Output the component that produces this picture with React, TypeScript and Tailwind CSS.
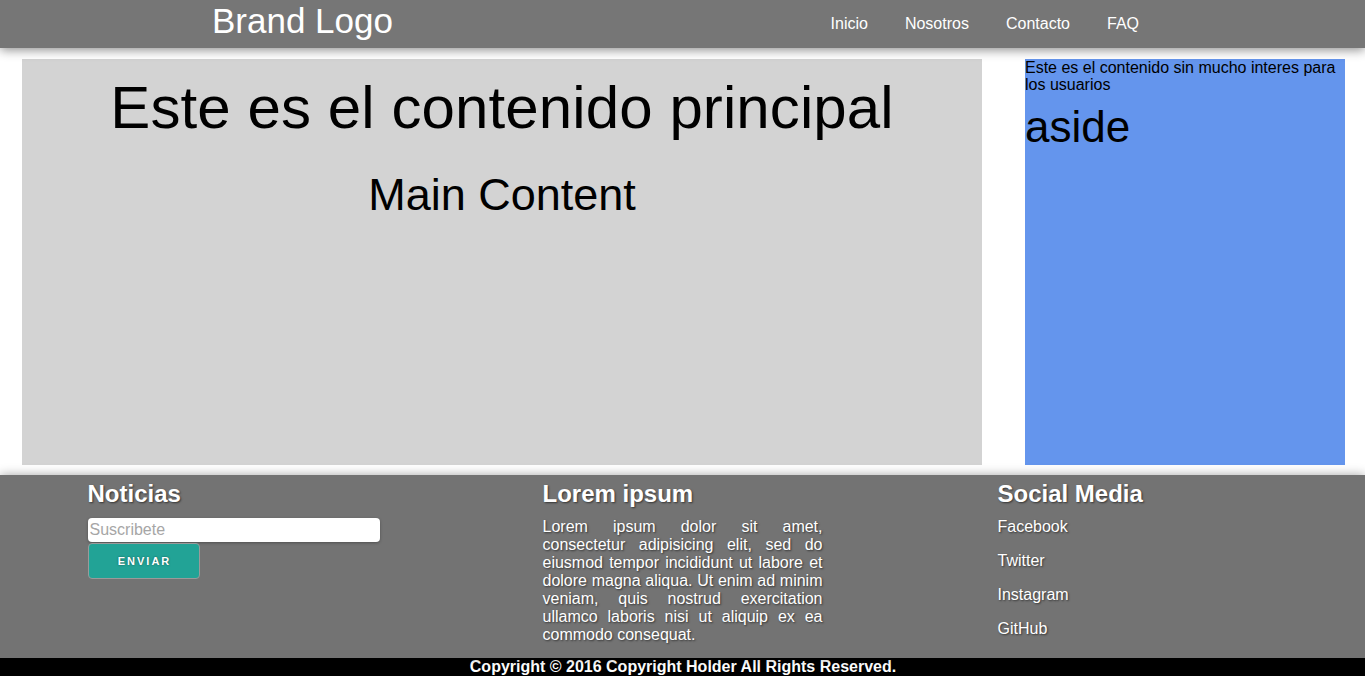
const navLinks = ["Inicio", "Nosotros", "Contacto", "FAQ"];
const socialLinks = ["Facebook", "Twitter", "Instagram", "GitHub"];

const shadow = "[text-shadow:1px_1px_2px_rgba(0,0,0,0.55)]";

export default function App() {
  return (
    <div className="min-h-screen bg-white font-['Liberation_Sans',Arial,sans-serif] text-black">
      <header className="relative z-10 flex h-[48px] items-start justify-between bg-[#767676] pl-[212px] pr-[226px] shadow-[0_2px_10px_rgba(0,0,0,0.45)]">
        <a href="#" className="text-[35px] leading-[42px] text-white">
          Brand Logo
        </a>
        <nav className="flex h-[48px] items-center gap-[37px]">
          {navLinks.map((link) => (
            <a key={link} href="#" className="text-[16px] text-white">
              {link}
            </a>
          ))}
        </nav>
      </header>

      <div className="flex h-[427px] justify-between pb-[10px] pl-[22px] pr-[20px] pt-[11px]">
        <main className="flex w-[960px] flex-col items-center bg-[#d3d3d3]">
          <h1 className="mt-[14px] text-[60px] leading-[69px] tracking-[0.1px]">
            Este es el contenido principal
          </h1>
          <h2 className="mt-[27px] text-[45px] leading-[52px]">Main Content</h2>
        </main>
        <aside className="w-[320px] bg-[#6495ed]">
          <p className="text-[16px] leading-[17px]">
            Este es el contenido sin mucho interes para los usuarios
          </p>
          <p className="mt-[9px] text-[44px] leading-[50px]">aside</p>
        </aside>
      </div>

      <footer className="relative z-10 grid h-[183px] grid-cols-3 bg-[#737373] pt-[5px] text-white shadow-[0_0_10px_rgba(0,0,0,0.35)]">
        <div className="mx-auto w-[280px]">
          <h3 className={`text-[24px] font-bold leading-[28px] ${shadow}`}>
            Noticias
          </h3>
          <input
            type="text"
            placeholder="Suscribete"
            className="mt-[10px] block h-[24px] w-[292px] rounded-[4px] bg-white px-[2px] text-[16px] text-black shadow-[0_1px_3px_rgba(0,0,0,0.3)] outline-none placeholder:text-[#a6a6a6]"
          />
          <button className="mt-[1px] h-[36px] w-[112px] rounded-[4px] border border-[#9a9a9a] bg-[#22a396] pl-[2px] text-[11px] font-bold tracking-[2px] text-white [text-shadow:0_0_2px_rgba(0,0,0,0.5)]">
            ENVIAR
          </button>
        </div>

        <div className="mx-auto w-[280px]">
          <h3 className={`text-[24px] font-bold leading-[28px] ${shadow}`}>
            Lorem ipsum
          </h3>
          <p className={`mt-[10px] text-justify text-[16px] leading-[18px] ${shadow}`}>
            Lorem ipsum dolor sit amet, consectetur adipisicing elit, sed do
            eiusmod tempor incididunt ut labore et dolore magna aliqua. Ut enim
            ad minim veniam, quis nostrud exercitation ullamco laboris nisi ut
            aliquip ex ea commodo consequat.
          </p>
        </div>

        <div className="mx-auto w-[280px]">
          <h3 className={`text-[24px] font-bold leading-[28px] ${shadow}`}>
            Social Media
          </h3>
          <ul className="mt-[10px] flex flex-col gap-[16px]">
            {socialLinks.map((link) => (
              <li key={link} className="leading-[18px]">
                <a href="#" className={`block text-[16px] leading-[18px] ${shadow}`}>
                  {link}
                </a>
              </li>
            ))}
          </ul>
        </div>
      </footer>

      <div className="bg-black pl-[1px] text-center text-[16px] font-bold leading-[18px] text-white">
        Copyright © 2016 Copyright Holder All Rights Reserved.
      </div>
    </div>
  );
}
